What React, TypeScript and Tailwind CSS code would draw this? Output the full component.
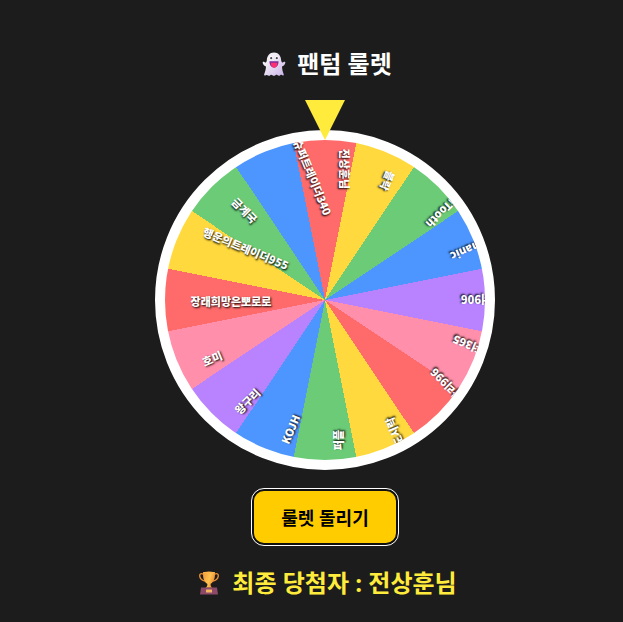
import { useState } from 'react'

type WheelLabel = {
  name: string
  angle: number
  x: number
  y: number
}

// x / y: label centre measured from the hub of the wheel
const LABELS: WheelLabel[] = [
  { name: '전상훈님', angle: 90, x: 20, y: -131 },
  { name: '블락', angle: 112.5, x: 63, y: -119 },
  { name: 'iTooth', angle: 135, x: 116, y: -86 },
  { name: 'manic', angle: 157.5, x: 142, y: -49 },
  { name: '더906', angle: 180, x: 151, y: 0 },
  { name: '더365', angle: 202.5, x: 142, y: 45 },
  { name: '다리996', angle: 225, x: 121, y: 85 },
  { name: '도시락', angle: 247.5, x: 69, y: 132 },
  { name: '퍼플', angle: 270, x: 13, y: 140 },
  { name: 'KOJH', angle: 292.5, x: -35, y: 129 },
  { name: '왕구리', angle: 315, x: -78, y: 101 },
  { name: '호미', angle: 337.5, x: -113, y: 58 },
  { name: '장래희망은뽀로로', angle: 0, x: -94, y: 1 },
  { name: '행운의트레이더955', angle: 22.5, x: -79, y: -52 },
  { name: '금계국', angle: 45, x: -80, y: -90 },
  { name: '슈퍼트레이더340', angle: 67.5, x: -12, y: -123 },
]

const COLORS = ['#ff6b6b', '#ffd93d', '#6bcb77', '#4d96ff', '#b983ff', '#ff8fab']
const SLICE = 360 / LABELS.length

const wheelGradient = `conic-gradient(from ${-SLICE / 2}deg, ${LABELS.map(
  (_, i) => `${COLORS[i % COLORS.length]} ${i * SLICE}deg ${(i + 1) * SLICE}deg`,
).join(', ')})`

function GhostIcon() {
  return (
    <svg viewBox="0 0 24 24" className="mx-1 size-6 shrink-0" aria-hidden="true">
      <defs>
        <linearGradient id="ghost" x1="0" y1="0" x2="1" y2="1">
          <stop offset="0.3" stopColor="#f3eef5" />
          <stop offset="1" stopColor="#c9b1e8" />
        </linearGradient>
      </defs>
      <path
        d="M12 0.5C7.6 0.5 5 3.8 4.8 8.6C4.3 10.7 3.6 11 2.7 10.2C1.5 9.2 0.3 9.8 0.7 11.1C1.2 12.9 2.4 14.2 4 14.6C3.9 17.4 3.2 19.7 2.2 22.2C1.9 23.3 2.8 23.7 3.8 23.2C4.7 22.7 5.3 22.8 6 23.4C6.8 24 7.6 23.9 8.3 23.2C9 22.6 9.7 22.7 10.4 23.3C11.4 24 12.4 24 13.4 23.3C14.2 22.7 14.8 22.7 15.6 23.3C16.5 24 17.4 23.9 18.2 23.2C19 22.7 19.5 22.8 20.2 23.3C21.2 23.7 22 23.2 21.7 22.2C20.7 19.6 20.1 17.4 20 14.6C21.6 14.2 22.8 12.9 23.3 11.1C23.7 9.8 22.5 9.2 21.3 10.2C20.4 11 19.7 10.7 19.2 8.6C19 3.8 16.4 0.5 12 0.5Z"
        fill="url(#ghost)"
      />
      <circle cx="9.2" cy="6" r="1.8" fill="#fff" />
      <circle cx="14.8" cy="6" r="1.8" fill="#fff" />
      <circle cx="9.2" cy="6.2" r="1.1" fill="#4a4650" />
      <circle cx="14.8" cy="6.2" r="1.1" fill="#4a4650" />
      <path d="M7.5 9.3H16.5C16.6 13 15 15.6 12 15.6S7.4 13 7.5 9.3Z" fill="#7b2d9b" />
      <path d="M9 10.8H15.2V12.2C15.2 16.8 9.3 16.8 9 12.2Z" fill="#ff2f72" />
    </svg>
  )
}

function TrophyIcon() {
  return (
    <svg viewBox="0 0 24 24" className="mx-1 size-6 shrink-0" aria-hidden="true">
      <defs>
        <linearGradient id="cup" x1="0" y1="0" x2="1" y2="0.4">
          <stop offset="0" stopColor="#ef9838" />
          <stop offset="0.6" stopColor="#ffc34e" />
          <stop offset="1" stopColor="#ee8d35" />
        </linearGradient>
      </defs>
      <path
        d="M6.4 3.2C3.8 1.8 2.2 3.2 2.8 5.6C3.4 8 5.4 9.6 8 10M17.6 3.2C20.2 1.8 21.8 3.2 21.2 5.6C20.6 8 18.6 9.6 16 10"
        fill="none"
        stroke="#e99032"
        strokeWidth="1.4"
      />
      <path
        d="M6 1.2H18C18.1 6.8 17.4 10.4 13.7 12.8C13.3 14.7 14 15.8 15.4 16.8H8.6C10 15.8 10.7 14.7 10.3 12.8C6.6 10.4 5.9 6.8 6 1.2Z"
        fill="url(#cup)"
      />
      <ellipse cx="12" cy="1.6" rx="6" ry="1" fill="#ffb54a" />
      <path d="M4 16.6H20L21 23.5H3Z" fill="#8c4a68" />
      <rect x="9" y="18.4" width="6" height="3" rx="0.5" fill="#f6b765" />
    </svg>
  )
}

export default function App() {
  const [turns, setTurns] = useState(0)

  return (
    <main className="flex min-h-screen flex-col items-center bg-[#1c1c1c] pt-12 pl-[27px] font-['Open_Sans','Noto_Sans_CJK_KR',sans-serif] text-white">
      <h1 className="flex h-8 items-center gap-[7px] text-2xl font-bold">
        <GhostIcon />
        팬텀 룰렛
      </h1>

      <div className="relative mt-[50px]">
        <div className="absolute -top-[30px] left-1/2 z-10 h-10 w-10 -translate-x-1/2 bg-[#ffeb3b] [clip-path:polygon(0_0,100%_0,50%_100%)]" />
        <div
          className="relative size-[340px] overflow-hidden rounded-full border-10 border-white font-['Noto_Sans_CJK_KR',sans-serif] transition-transform duration-[4000ms] ease-out"
          style={{
            background: wheelGradient,
            transform: turns ? `rotate(${turns * 360}deg)` : undefined,
          }}
        >
          {LABELS.map((label) => (
            <span
              key={label.name}
              className="absolute top-1/2 left-1/2 text-[11px] leading-4 font-black whitespace-nowrap [text-shadow:1px_1px_2px_#000]"
              style={{
                transform: `translate(-50%, -50%) translate(${label.x}px, ${label.y}px) rotate(${label.angle}deg)`,
              }}
            >
              {label.name}
            </span>
          ))}
        </div>
      </div>

      <button
        type="button"
        onClick={() => setTurns((t) => t + 5)}
        className="mt-[19px] rounded-xl border-2 border-[#101010] bg-[#ffcc00] px-[27px] pt-[13px] pb-[11px] text-lg leading-7 font-bold text-black outline-1 outline-white"
      >
        룰렛 돌리기
      </button>

      <h2 className="mt-5 flex h-9 items-center gap-[7px] text-2xl font-bold text-[#ffeb3b]">
        <TrophyIcon />
        최종 당첨자 : 전상훈님
      </h2>
    </main>
  )
}
